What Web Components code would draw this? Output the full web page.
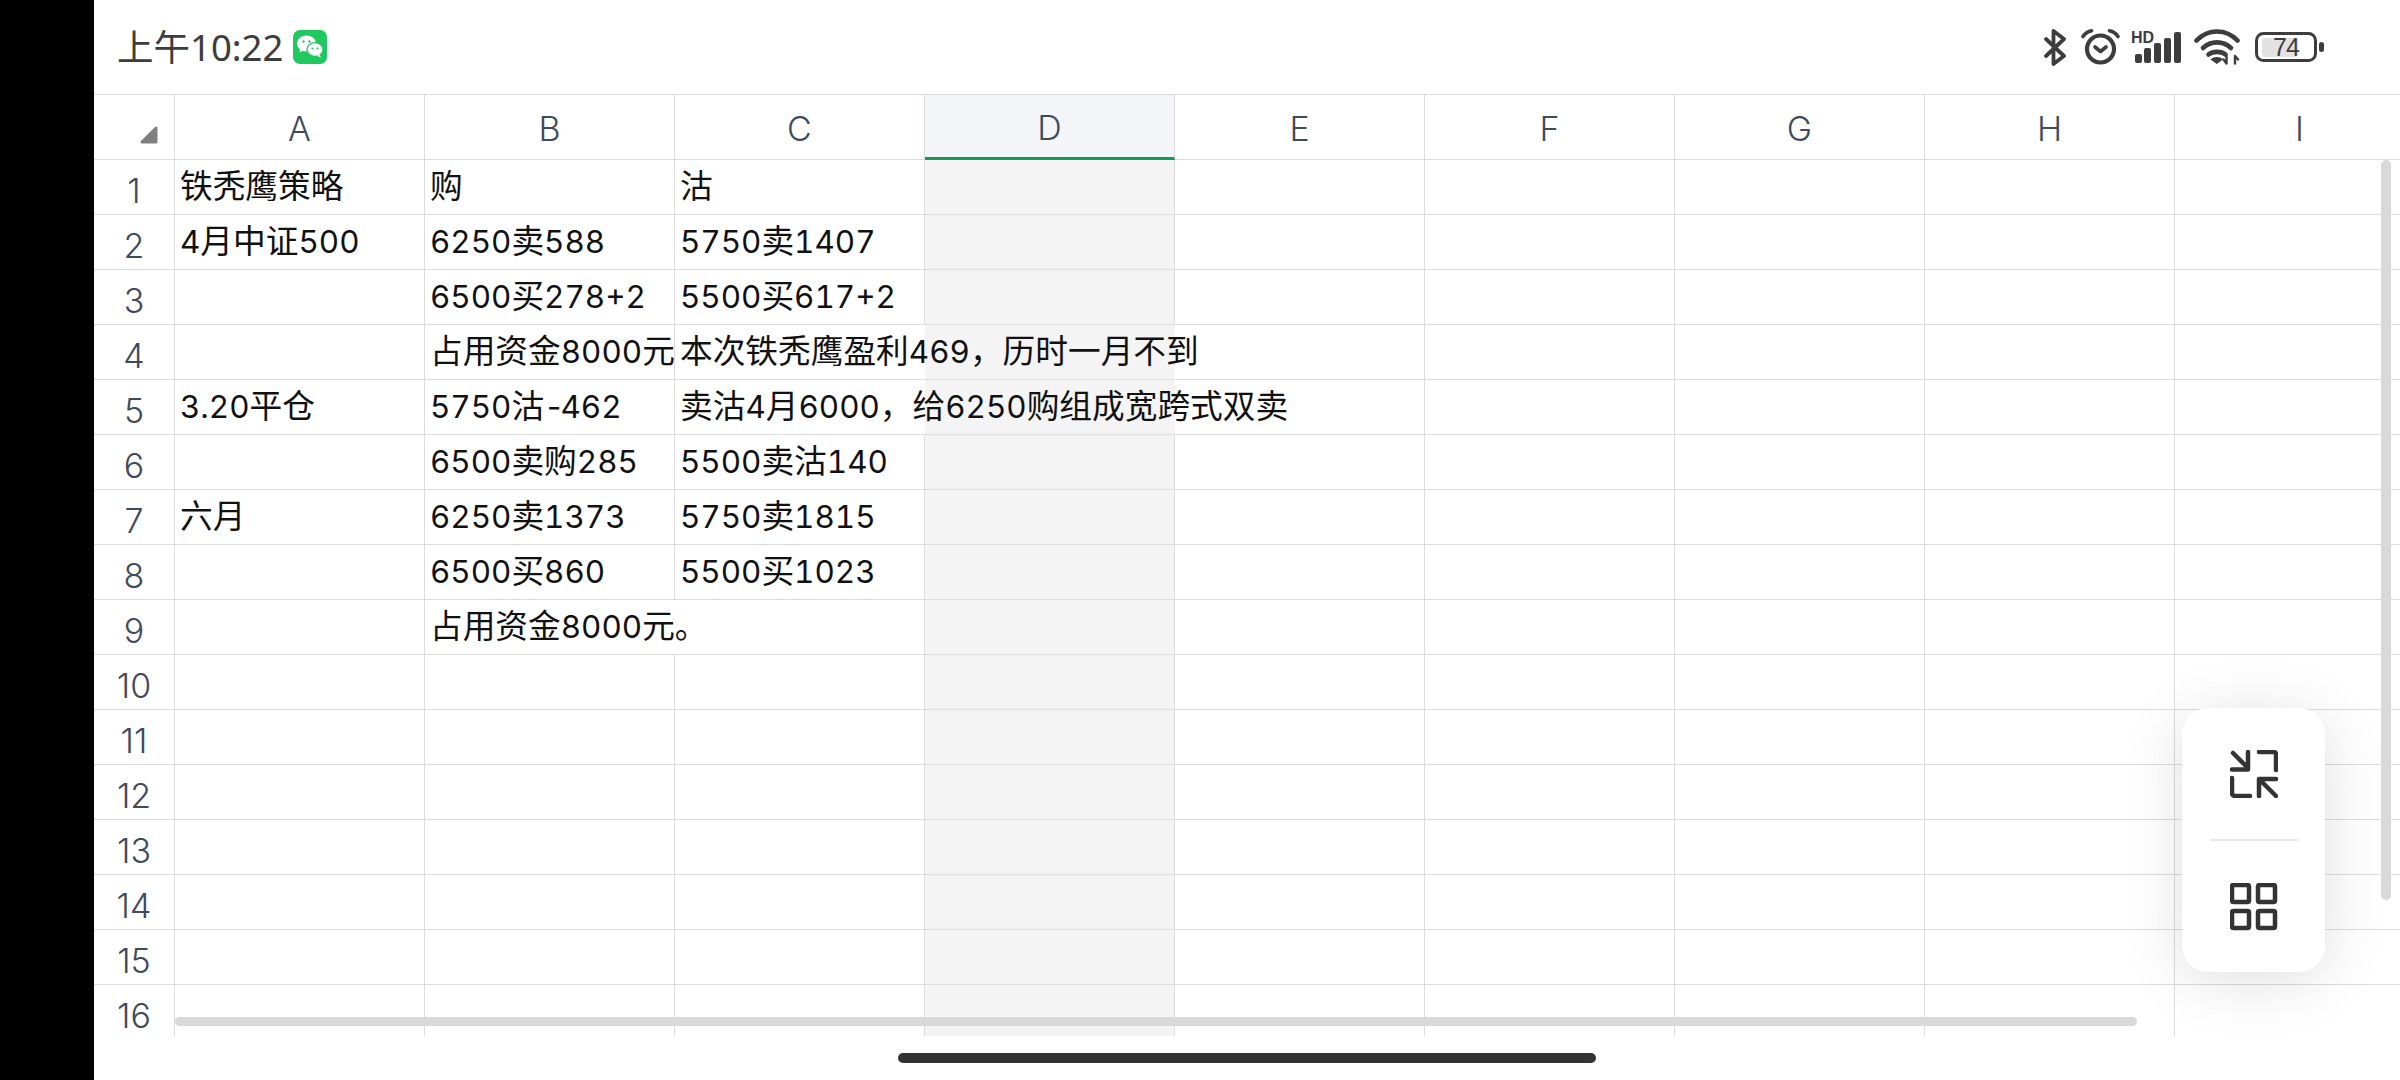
<!DOCTYPE html>
<html>
<head>
<meta charset="utf-8">
<style>
  html, body { margin: 0; height: 100%; background: #000; overflow: hidden; }
  body { display: flex; width: 2400px; height: 1080px; }
  phone-screen { flex: 1; }
</style>
</head>
<body>
<phone-screen>
  <status-bar slot="status"></status-bar>
  <sheet-grid slot="sheet"></sheet-grid>
</phone-screen>

<script>
const ROWS = {
  1: ['铁秃鹰策略', '购', '沽'],
  2: ['4月中证500', '6250卖588', '5750卖1407'],
  3: ['', '6500买278+2', '5500买617+2'],
  4: ['', '占用资金8000元', '本次铁秃鹰盈利469，历时一月不到'],
  5: ['3.20平仓', '5750沽-462', '卖沽4月6000，给6250购组成宽跨式双卖'],
  6: ['', '6500卖购285', '5500卖沽140'],
  7: ['六月', '6250卖1373', '5750卖1815'],
  8: ['', '6500买860', '5500买1023'],
  9: ['', '占用资金8000元。', '']
};
const COLS = ['A', 'B', 'C', 'D', 'E', 'F', 'G', 'H', 'I'];
// cells whose right line is covered by text spilling out of them
const NO_LINE = ['C4', 'D4', 'C5', 'D5', 'B9'];

class PhoneScreen extends HTMLElement {
  constructor() {
    super();
    this.attachShadow({ mode: 'open' });
    this.shadowRoot.innerHTML = `
      <style>
        :host { display: flex; flex-direction: column; margin-left: 94px; height: 1080px; background: #fff; position: relative; overflow: hidden; }
        .foot { flex: 1; padding: 17px 0 0 804px; }
        .home { width: 698px; height: 10px; border-radius: 5px; background: #333; }
      </style>
      <slot name="status"></slot>
      <slot name="sheet"></slot>
      <div class="foot"><div class="home"></div></div>
      <float-card></float-card>
    `;
  }
}

class StatusBar extends HTMLElement {
  constructor() {
    super();
    this.attachShadow({ mode: 'open' });
    this.shadowRoot.innerHTML = `
      <style>
        :host { display: flex; align-items: center; height: 94px; padding: 0 76px 0 23px; box-sizing: border-box; color: #3d3d3d; }
        .time { font: 400 36.500px "Noto Sans", "Noto Sans CJK SC", sans-serif; margin-bottom: 4px; }
        .wx { margin-left: 10px; width: 34px; height: 34px; }
        .icons { margin-left: auto; display: flex; align-items: center; }
        svg { display: block; }
        .bt { margin-right: 14px; }
        .alarm { margin-right: 11px; }
        .sig { margin-right: 13px; }
        .wifi { margin-right: 15px; }
        .batt { position: relative; width: 69px; height: 30px; }
        .batt span { position: absolute; left: 7px; top: 0; width: 48px; text-align: center; font: 400 25px/31px "Liberation Sans", sans-serif; letter-spacing: -1px; color: #3d3d3d; }
      </style>
      <span class="time">上午10:22</span>
      <svg class="wx" viewBox="0 0 34 34">
        <rect width="34" height="34" rx="7" fill="#1fc95f"/>
        <ellipse cx="13.500" cy="13.500" rx="9.500" ry="8" fill="#fff"/>
        <path d="M7.500 18.500l-1 4 4.500-2.500z" fill="#fff"/>
        <ellipse cx="22" cy="19.500" rx="8" ry="6.800" fill="#fff" stroke="#1fc95f" stroke-width="1.200"/>
        <path d="M26.500 24.500l1.500 3-4-1.500z" fill="#fff"/>
        <circle cx="10.500" cy="11.500" r="1.200" fill="#1fc95f"/><circle cx="16.500" cy="11.500" r="1.200" fill="#1fc95f"/>
        <circle cx="19.500" cy="18.500" r="1" fill="#1fc95f"/><circle cx="24.500" cy="18.500" r="1" fill="#1fc95f"/>
      </svg>
      <div class="icons">
        <svg class="bt" width="24" height="37" viewBox="0 0 24 37" fill="none" stroke="#3d3d3d" stroke-width="3.800" stroke-linecap="round" stroke-linejoin="round">
          <path d="M3 10L21 27 10.500 35V2L21 10 3 27"/>
        </svg>
        <svg class="alarm" width="39" height="36" viewBox="0 0 39 36" fill="none" stroke="#3d3d3d" stroke-linecap="round" stroke-linejoin="round">
          <circle cx="19.500" cy="20" r="13.500" stroke-width="4.200"/>
          <path d="M14 18l5.500 4.500L25 18" stroke-width="3.600"/>
          <path d="M2 7.500C4 4.500 7 2.500 10.500 1.800M37 7.500C35 4.500 32 2.500 28.500 1.800" stroke-width="3.600"/>
        </svg>
        <svg class="sig" width="50" height="38" viewBox="0 0 50 38" fill="#3d3d3d">
          <text x="0" y="15" font-family="Liberation Sans" font-weight="700" font-size="16">HD</text>
          <rect x="4" y="26" width="7" height="9" rx="2"/>
          <rect x="13" y="20" width="7" height="15" rx="2"/>
          <rect x="23" y="15" width="7" height="20" rx="2"/>
          <rect x="33" y="10" width="7" height="25" rx="2"/>
          <rect x="43" y="4" width="7" height="31" rx="2"/>
        </svg>
        <svg class="wifi" width="46" height="36" viewBox="0 0 46 36" fill="none" stroke="#3d3d3d" stroke-width="4.600" stroke-linecap="round">
          <path d="M2.500 11.500C14 -0.500 32 -0.500 43.500 11.500"/>
          <path d="M9 19C17 11.500 29 11.500 37 19"/>
          <path d="M14.500 25.500C19 22 27 22 31.500 25.500"/>
          <path d="M16.500 30.500c4-3.200 9-3.200 12.500 0l-6.200 4.500z" fill="#3d3d3d" stroke="none"/>
          <path d="M32.500 27v7.500M29.500 30.500l3 4M41 27v7.500M44 30.500l-3-3.500" stroke-width="2.400"/>
        </svg>
        <div class="batt">
          <svg width="69" height="30" viewBox="0 0 69 30" fill="none">
            <rect x="1.500" y="1.500" width="59" height="27" rx="7" stroke="#3d3d3d" stroke-width="3"/>
            <rect x="7" y="6" width="36" height="19" rx="3" fill="#e2e2e2"/>
            <rect x="64" y="10" width="5" height="10" rx="2.500" fill="#3d3d3d"/>
          </svg>
          <span>74</span>
        </div>
      </div>
    `;
  }
}

class SheetGrid extends HTMLElement {
  constructor() {
    super();
    this.attachShadow({ mode: 'open' });
    let html = `<div class="corner"><svg width="18" height="18" viewBox="0 0 18 18"><path d="M2 16L16 2v14z" fill="#808080" stroke="#808080" stroke-width="3" stroke-linejoin="round"/></svg></div>`;
    COLS.forEach(c => { html += `<div class="head ${c === 'D' ? 'sel' : ''}">${c}</div>`; });
    for (let r = 1; r <= 16; r++) {
      html += `<div class="num">${r}</div>`;
      const vals = ROWS[r] || [];
      COLS.forEach((c, i) => {
        const txt = vals[i] || '';
        let cls = 'cell';
        if (c === 'D') cls += ' sel';
        if (txt) cls += ' has';
        if (NO_LINE.includes(c + r)) cls += ' noline';
        // digits sit in their own span, they are a wider face than the CJK
        const marked = txt
          .replace(/[0-9.+]+/g, m => `<span class="n">${m}</span>`)
          .replace(/-/g, '<span class="n h">-</span>');
        html += `<div class="${cls}">${marked}</div>`;
      });
    }
    this.shadowRoot.innerHTML = `
      <style>
        :host { display: block; height: 942px; position: relative; overflow: hidden; }
        .grid { display: grid; grid-template-columns: 81px repeat(9, 250px); grid-template-rows: 65px repeat(16, 55px); border-top: 1px solid #dcdcdc; }
        .corner, .head, .num, .cell { box-sizing: border-box; border-bottom: 1px solid #dcdcdc; border-right: 1px solid #dcdcdc; }
        .corner { display: flex; justify-content: flex-end; align-items: flex-end; padding: 0 16px 15px 0; }
        .corner svg { display: block; }
        .head { display: flex; align-items: center; justify-content: center; padding-top: 3px; font: 350 34px "Inter", sans-serif; color: #3f4a5c; }
        .head.sel { background: #f4f5f8; border-bottom: 3px solid #129c50; }
        .num { display: flex; align-items: flex-end; justify-content: center; padding-bottom: 3px; font: 350 34px "Inter", sans-serif; color: #3f4a5c; }
        .cell { font: 400 32.700px/48px "Noto Sans CJK SC", sans-serif; color: #111; padding-left: 5px; white-space: nowrap; }
        .cell .n { font: 400 31.400px/1 "Inter", sans-serif; font-feature-settings: "tnum"; }
        .cell .h { letter-spacing: -5px; margin-right: 1px; }
        .cell.has { position: relative; z-index: 1; }
        .cell.sel { background: #f4f4f4; }
        .cell.noline { border-right-color: transparent; }
        .hbar { position: absolute; left: 81px; top: 923px; width: 1962px; height: 9px; border-radius: 5px; background: #d9d9d9; z-index: 2; }
        .vbar { position: absolute; left: 2287px; top: 66px; width: 10px; height: 740px; border-radius: 5px; background: #d9d9d9; z-index: 2; }
      </style>
      <div class="grid">${html}</div>
      <div class="hbar"></div>
      <div class="vbar"></div>
    `;
  }
}

class FloatCard extends HTMLElement {
  constructor() {
    super();
    this.attachShadow({ mode: 'open' });
    this.shadowRoot.innerHTML = `
      <style>
        :host { position: absolute; left: 2088px; top: 708px; width: 143px; height: 264px; background: #fff; border-radius: 26px; box-shadow: 0 8px 60px rgba(0,0,0,.13); display: flex; flex-direction: column; align-items: center; z-index: 3; }
        .top, .bot { height: 131px; display: flex; align-items: center; justify-content: center; }
        hr { width: 88px; margin: 0; border: 0; height: 2px; background: #e8e8e8; }
        svg { display: block; }
      </style>
      <div class="top">
        <svg width="48" height="48" viewBox="0 0 48 48" fill="none" stroke="#333" stroke-width="4.500" stroke-linecap="round" stroke-linejoin="round">
          <path d="M3 3l15 15M18 2v17.500H2"/>
          <path d="M29 2h15a2 2 0 0 1 2 2v16"/>
          <path d="M2 28v15a3 3 0 0 0 3 3h15"/>
          <path d="M46 46L30 30M29 46V29h17"/>
        </svg>
      </div>
      <hr>
      <div class="bot">
        <svg width="48" height="48" viewBox="0 0 48 48" fill="none" stroke="#333" stroke-width="4.500" stroke-linejoin="round">
          <rect x="2" y="2" width="17" height="17" rx="1.500"/>
          <rect x="28" y="2" width="17" height="17" rx="1.500"/>
          <rect x="2" y="28" width="17" height="17" rx="1.500"/>
          <rect x="28" y="28" width="17" height="17" rx="1.500"/>
        </svg>
      </div>
    `;
  }
}

customElements.define('status-bar', StatusBar);
customElements.define('sheet-grid', SheetGrid);
customElements.define('float-card', FloatCard);
customElements.define('phone-screen', PhoneScreen);
</script>
</body>
</html>
